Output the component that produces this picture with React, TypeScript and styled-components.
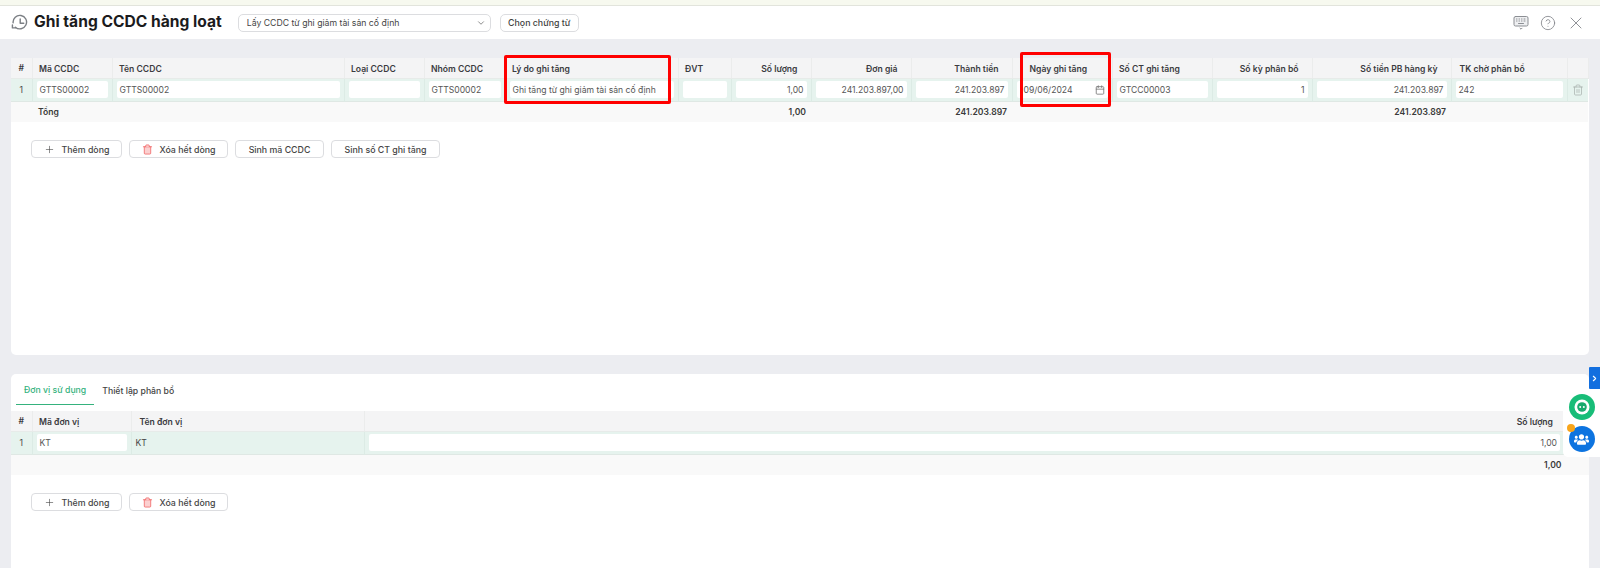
import React from 'react';
import styled, { createGlobalStyle } from 'styled-components';
import { Calendar, ChevronDown, ChevronRight, CircleHelp, Plus, Trash2, X } from 'lucide-react';
import { FaUsers } from 'react-icons/fa';

const GlobalStyle = createGlobalStyle`
  html, body {
    margin: 0;
    height: 100%;
    overflow: hidden;
  }
  body {
    font-family: Inter, "Noto Sans", "Liberation Sans", sans-serif;
    color: #333;
    background: #ecedf1;
  }
  * {
    box-sizing: border-box;
  }
`;

type Align = 'left' | 'right';

type Column = {
  title: string;
  width: number;
  align?: Align;
  value?: string;
  total?: string;
};

const assetColumns: Column[] = [
  { title: 'Mã CCDC', width: 80, value: 'GTTS00002' },
  { title: 'Tên CCDC', width: 232, value: 'GTTS00002' },
  { title: 'Loại CCDC', width: 80, value: '' },
  { title: 'Nhóm CCDC', width: 81, value: 'GTTS00002' },
  { title: 'Lý do ghi tăng', width: 173, value: 'Ghi tăng từ ghi giảm tài sản cố định' },
  { title: 'ĐVT', width: 53, value: '' },
  { title: 'Số lượng', width: 80, align: 'right', value: '1,00', total: '1,00' },
  { title: 'Đơn giá', width: 100, align: 'right', value: '241.203.897,00' },
  { title: 'Thành tiền', width: 101, align: 'right', value: '241.203.897', total: '241.203.897' },
  { title: 'Ngày ghi tăng', width: 100 },
  { title: 'Số CT ghi tăng', width: 100, value: 'GTCC00003' },
  { title: 'Số kỳ phân bổ', width: 100, align: 'right', value: '1' },
  { title: 'Số tiền PB hàng kỳ', width: 139, align: 'right', value: '241.203.897', total: '241.203.897' },
  { title: 'TK chờ phân bổ', width: 116, value: '242' },
];

const HistoryIcon = () => (
  <svg width="17" height="17" viewBox="0 0 24 24" fill="none" stroke="#7b7f84" strokeWidth="2" strokeLinecap="round" strokeLinejoin="round">
    <path d="M6.2 18.6A9.5 9.5 0 1 0 3 12.4" />
    <path d="M2 15.4v4.2h4.4" />
    <path d="M13 7v6h5" />
  </svg>
);

const KeyboardIcon = () => (
  <svg width="16" height="16" viewBox="0 0 16 16" fill="none" stroke="#8b8e93" strokeWidth="1" strokeLinecap="round" strokeLinejoin="round">
    <rect x="1" y="1.5" width="14" height="9.5" rx="1.5" fill="#eeeff1" />
    <path d="M3.5 4h.5M6 4h.5M8.5 4H9M11 4h1M3.5 6h.5M6 6h.5M8.5 6H9M11 6h1M5.5 8.5h5" />
    <path d="M7 13.2l1 1 1-1" />
  </svg>
);

const BotIcon = () => (
  <svg width="26" height="26" viewBox="0 0 26 26">
    <circle cx="13" cy="13" r="13" fill="#18bd78" />
    <circle cx="13" cy="13" r="7.5" fill="#fff" />
    <circle cx="13" cy="13" r="4.8" fill="#18a96d" />
    <circle cx="11.2" cy="13" r="1" fill="#fff" />
    <circle cx="14.8" cy="13" r="1" fill="#fff" />
  </svg>
);

const Page = styled.div`
  display: flex;
  flex-direction: column;
  height: 568px;
  overflow: hidden;
`;

const TopStrip = styled.div`
  height: 6px;
  background: #f7f9ef;
  border-bottom: 1px solid #e2e4dc;
`;

const Header = styled.header`
  display: flex;
  align-items: center;
  height: 33px;
  padding: 0 10.5px 0 11px;
  background: #fff;
`;

const Title = styled.h1`
  margin: 0 16px 2px 6px;
  font-size: 15.6px;
  font-weight: 700;
  color: #1b1b1d;
  white-space: nowrap;
`;

const SelectBox = styled.div`
  display: flex;
  align-items: center;
  justify-content: space-between;
  width: 253px;
  height: 18px;
  padding: 0 4px 0 8px;
  margin-right: 9px;
  font-size: 8.7px;
  color: #444;
  background: #fff;
  border: 1px solid #dcdde0;
  border-radius: 5px;
`;

const HeaderTools = styled.div`
  display: flex;
  align-items: center;
  margin-left: auto;
  color: #85888d;
`;

const ToolSlot = styled.span`
  display: flex;
  align-items: center;
  justify-content: center;
  width: 27.5px;
`;

const Content = styled.main`
  display: flex;
  flex: 1;
  flex-direction: column;
  gap: 19px;
  min-height: 0;
  padding: 19px 11px 0;
`;

const Panel = styled.section<{ $grow?: boolean }>`
  flex: ${(p) => (p.$grow ? 1 : '0 0 297px')};
  background: #fff;
  border-radius: ${(p) => (p.$grow ? '5px 5px 0 0' : '0 0 5px 5px')};
`;

const Table = styled.table<{ $width: string }>`
  width: ${(p) => p.$width};
  border-collapse: collapse;
  table-layout: fixed;
  font-size: 8.6px;
`;

const HeadCell = styled.th<{ $align?: Align; $pad?: number }>`
  position: relative;
  height: 20px;
  padding: 2px ${(p) => (p.$align === 'right' ? 13 : 6)}px 0 ${(p) => p.$pad ?? 6.5}px;
  font-weight: 600;
  color: #3b3b3f;
  text-align: ${(p) => p.$align ?? 'left'};
  white-space: nowrap;
  background: #f4f4f5;
  border-right: 1px solid #ebecec;
  border-bottom: 1px solid #e7ebe9;
`;

const IndexHead = styled(HeadCell)`
  padding: 0;
  text-align: center;
`;

const DataRow = styled.tr`
  height: 23px;
  background: #e6f3ee;
  border-bottom: 1px solid #dfe8e4;
`;

const DataCell = styled.td<{ $pad?: string }>`
  padding: ${(p) => p.$pad ?? '0 4px'};
  border-right: 1px solid #dcebe5;
`;

const IndexCell = styled(DataCell)`
  padding: 0;
  color: #4a4a4a;
  text-align: center;
`;

const PlainValue = styled.span`
  padding-top: 1px;
  display: block;
  color: #444;
`;

const Field = styled.div<{ $align?: Align; $inset?: number }>`
  display: flex;
  align-items: center;
  justify-content: ${(p) => (p.$align === 'right' ? 'flex-end' : 'space-between')};
  height: 17px;
  padding: 0 3px 0 ${(p) => p.$inset ?? 3}px;
  overflow: hidden;
  font-size: 8.6px;
  color: #555;
  white-space: nowrap;
  background: #fff;
  border-radius: 2px;
`;

const TotalRow = styled.tr`
  height: 21px;
  background: #f9f9f9;
`;

const TotalCell = styled.td<{ $align?: Align }>`
  padding: 0 5px 0 6px;
  font-weight: 600;
  color: #3a3a3a;
  text-align: ${(p) => p.$align ?? 'left'};
`;

const RemoveCell = styled(DataCell)`
  padding: 0;
  color: #a5aeaa;
  text-align: center;
  border-right: none;

  svg {
    display: block;
    margin: 0 auto;
  }
`;

const Highlight = styled.span<{ $top: number; $left: number; $w: number; $h: number }>`
  position: absolute;
  top: ${(p) => p.$top}px;
  left: ${(p) => p.$left}px;
  width: ${(p) => p.$w}px;
  height: ${(p) => p.$h}px;
  border: 3px solid #f00;
  border-radius: 2px;
  z-index: 2;
`;

const ButtonRow = styled.div`
  display: flex;
  gap: 7px;
  padding: 18px 0 0 20px;
`;

const Button = styled.button<{ $width: number }>`
  display: flex;
  align-items: center;
  justify-content: center;
  gap: 7px;
  width: ${(p) => p.$width}px;
  height: 18px;
  padding: 0;
  font-family: inherit;
  font-size: 8.8px;
  font-weight: 500;
  color: #444;
  background: #fff;
  border: 1px solid #dcdde0;
  border-radius: 4px;
`;

const HeaderButton = styled(Button)`
  color: #3f3f3f;
  border-radius: 5px;
`;

const Tabs = styled.div`
  display: flex;
  height: 31px;
  margin-bottom: 6px;
  padding-left: 5px;
`;

const Tab = styled.div<{ $active?: boolean }>`
  display: flex;
  align-items: center;
  padding: 2px 8px 0;
  font-size: 8.7px;
  font-weight: 500;
  color: ${(p) => (p.$active ? '#35b27d' : '#444')};
  border-bottom: ${(p) => (p.$active ? '1.5px solid #35b27d' : 'none')};
`;

const Widget = styled.aside`
  position: absolute;
  top: 389px;
  right: 0;
  display: flex;
  flex-direction: column;
  align-items: center;
  gap: 6px;
  width: 37px;
  height: 68px;
  padding-top: 5px;
  background: #fff;
  border-radius: 5px 0 0 5px;
`;

const WidgetToggle = styled.div`
  position: absolute;
  top: 367px;
  right: 0;
  display: flex;
  align-items: center;
  justify-content: center;
  width: 11px;
  height: 22px;
  color: #fff;
  background: #126fdf;
  border-radius: 1px 0 0 1px;
`;

const PeopleButton = styled.div`
  position: relative;
  display: flex;
  align-items: center;
  justify-content: center;
  width: 26px;
  height: 26px;
  color: #fff;
  background: #0d74e0;
  border-radius: 50%;
`;

const Badge = styled.span`
  position: absolute;
  top: -2px;
  left: -2px;
  width: 8px;
  height: 8px;
  background: #f8a51b;
  border-radius: 50%;
`;

const AddButton = ({ width }: { width: number }) => (
  <Button $width={width}>
    <Plus size={11} strokeWidth={1.3} />
    Thêm dòng
  </Button>
);

const ClearButton = () => (
  <Button $width={99}>
    <Trash2 size={11} color="#f05a5a" fill="#fbd0d0" strokeWidth={1.6} />
    Xóa hết dòng
  </Button>
);

const headPad = (title: string) => {
  if (title === 'Ngày ghi tăng') return 17;
  if (title === 'TK chờ phân bổ') return 8;
  return undefined;
};

export default function App() {
  return (
    <Page>
      <GlobalStyle />
      <TopStrip />
      <Header>
        <HistoryIcon />
        <Title>Ghi tăng CCDC hàng loạt</Title>
        <SelectBox>
          Lấy CCDC từ ghi giảm tài sản cố định
          <ChevronDown size={10} color="#777" />
        </SelectBox>
        <HeaderButton $width={79}>Chọn chứng từ</HeaderButton>
        <HeaderTools>
          <ToolSlot>
            <KeyboardIcon />
          </ToolSlot>
          <ToolSlot>
            <CircleHelp size={16} strokeWidth={1.3} />
          </ToolSlot>
          <ToolSlot>
            <X size={20} strokeWidth={1.1} />
          </ToolSlot>
        </HeaderTools>
      </Header>

      <Content>
        <Panel>
          <Table $width="1577px">
            <colgroup>
              <col style={{ width: 21 }} />
              {assetColumns.map((c) => (
                <col key={c.title} style={{ width: c.width }} />
              ))}
              <col style={{ width: 21 }} />
            </colgroup>
            <thead>
              <tr>
                <IndexHead>#</IndexHead>
                {assetColumns.map((c) => (
                  <HeadCell key={c.title} $align={c.align} $pad={headPad(c.title)}>
                    {c.title}
                    {c.title === 'Lý do ghi tăng' && <Highlight $top={-3} $left={-2} $w={167} $h={49} />}
                    {c.title === 'Ngày ghi tăng' && <Highlight $top={-6} $left={7} $w={91} $h={55} />}
                  </HeadCell>
                ))}
                <HeadCell />
              </tr>
            </thead>
            <tbody>
              <DataRow>
                <IndexCell>1</IndexCell>
                {assetColumns.map((c) => (
                  <DataCell key={c.title}>
                    {c.title === 'Ngày ghi tăng' ? (
                      <Field $inset={7}>
                        09/06/2024
                        <Calendar size={10} color="#777" />
                      </Field>
                    ) : (
                      <Field $align={c.align}>{c.value}</Field>
                    )}
                  </DataCell>
                ))}
                <RemoveCell>
                  <Trash2 size={12} strokeWidth={1.4} />
                </RemoveCell>
              </DataRow>
              <TotalRow>
                <td />
                {assetColumns.map((c, i) => (
                  <TotalCell key={c.title} $align={c.align}>
                    {i === 0 ? 'Tổng' : c.total}
                  </TotalCell>
                ))}
                <td />
              </TotalRow>
            </tbody>
          </Table>
          <ButtonRow>
            <AddButton width={91} />
            <ClearButton />
            <Button $width={89}>Sinh mã CCDC</Button>
            <Button $width={109}>Sinh số CT ghi tăng</Button>
          </ButtonRow>
        </Panel>

        <Panel $grow>
          <Tabs>
            <Tab $active>Đơn vị sử dụng</Tab>
            <Tab>Thiết lập phân bổ</Tab>
          </Tabs>
          <Table $width="100%">
            <colgroup>
              <col style={{ width: 21 }} />
              <col style={{ width: 99 }} />
              <col style={{ width: 233 }} />
              <col />
            </colgroup>
            <thead>
              <tr>
                <IndexHead>#</IndexHead>
                <HeadCell>Mã đơn vị</HeadCell>
                <HeadCell $pad={8}>Tên đơn vị</HeadCell>
                <HeadCell $align="right" style={{ paddingRight: 35 }}>
                  Số lượng
                </HeadCell>
              </tr>
            </thead>
            <tbody>
              <DataRow>
                <IndexCell>1</IndexCell>
                <DataCell>
                  <Field>KT</Field>
                </DataCell>
                <DataCell>
                  <PlainValue>KT</PlainValue>
                </DataCell>
                <DataCell $pad="0 28px 0 4px">
                  <Field $align="right">1,00</Field>
                </DataCell>
              </DataRow>
              <TotalRow>
                <td />
                <td />
                <td />
                <TotalCell $align="right" style={{ paddingRight: 27 }}>
                  1,00
                </TotalCell>
              </TotalRow>
            </tbody>
          </Table>
          <ButtonRow>
            <AddButton width={91} />
            <ClearButton />
          </ButtonRow>
        </Panel>
      </Content>

      <WidgetToggle>
        <ChevronRight size={9} strokeWidth={3} />
      </WidgetToggle>
      <Widget>
        <BotIcon />
        <PeopleButton>
          <Badge />
          <FaUsers size={15} />
        </PeopleButton>
      </Widget>
    </Page>
  );
}
